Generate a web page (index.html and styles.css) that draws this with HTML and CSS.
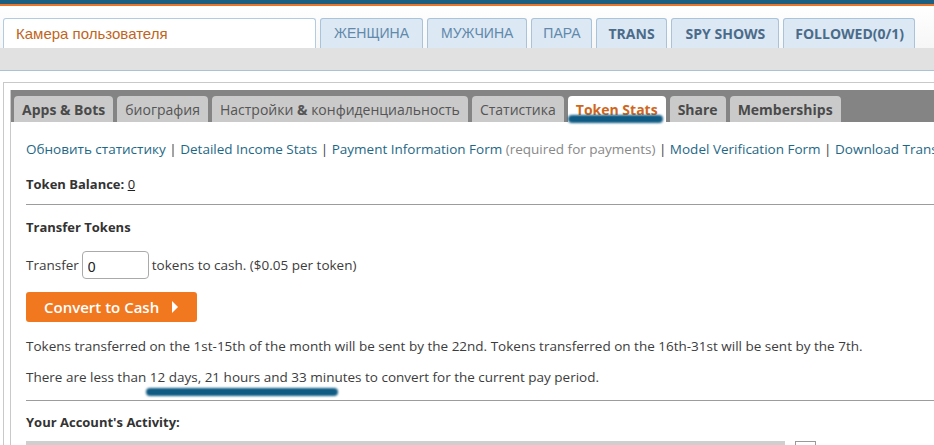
FILE: index.html
```html
<!DOCTYPE html>
<html lang="ru">
<head>
    <meta charset="UTF-8">
    <title>Token Stats</title>
    <link rel="stylesheet" href="styles.css">
</head>
<body>
    <div class="stripe"></div>
    <nav class="nav">
        <div class="search">Камера пользователя</div>
        <a class="navtab">ЖЕНЩИНА</a>
        <a class="navtab">МУЖЧИНА</a>
        <a class="navtab narrow">ПАРА</a>
        <a class="navtab bold">TRANS</a>
        <a class="navtab bold spy">SPY SHOWS</a>
        <a class="navtab bold followed">FOLLOWED(0/1)</a>
    </nav>
    <div class="subbar"></div>

    <div class="panel">
        <div class="inner">
            <ul class="tabs">
                <li>Apps &amp; Bots</li>
                <li class="light">биография</li>
                <li class="light">Настройки <b>&amp;</b> конфиденциальность</li>
                <li class="light">Статистика</li>
                <li class="active">Token Stats</li>
                <li>Share</li>
                <li>Memberships</li>
            </ul>
            <span class="mark mark-tab"></span>

            <div class="content">
                <p class="links">
                    <a>Обновить статистику</a> | <a>Detailed Income Stats</a> | <a>Payment Information Form</a> <span class="muted">(required for payments)</span> | <a>Model Verification Form</a> | <a>Download Transactions</a>
                </p>
                <p class="balance"><b>Token Balance:</b> <u>0</u></p>
                <hr>
                <h4>Transfer Tokens</h4>
                <p class="transfer">Transfer <input type="text" value="0"> tokens to cash. ($0.05 per token)</p>
                <button class="convert">Convert to Cash <span class="arrow"></span></button>
                <p class="note">Tokens transferred on the 1st-15th of the month will be sent by the 22nd. Tokens transferred on the 16th-31st will be sent by the 7th.</p>
                <p class="note second">There are less than 12 days, 21 hours and 33 minutes to convert for the current pay period.</p>
                <span class="mark mark-time"></span>
                <hr class="low">
                <h4 class="activity">Your Account's Activity:</h4>
                <div class="activity-row">
                    <div class="bar"></div>
                    <div class="box"></div>
                </div>
            </div>
        </div>
    </div>
</body>
</html>
```

FILE: styles.css
```css
body {
    margin: 0;
    background: #fff;
    font-family: 'Open Sans', sans-serif;
    color: #3c3c3c;
    overflow: hidden;
    width: 934px;
    height: 445px;
}

.stripe {
    height: 4px;
    background: #1b5f82;
    border-bottom: 2px solid #ec7428;
}

.nav {
    display: flex;
    gap: 4px;
    padding: 12px 0 0 3px;
    height: 30px;
    background: linear-gradient(#fff, #f6f6f6);
}

.search {
    box-sizing: border-box;
    width: 313px;
    height: 30px;
    padding: 6px 12px 0;
    border: 1px solid #b3cbe0;
    border-bottom: none;
    border-radius: 3px 3px 0 0;
    background: #fff;
    color: #c0651d;
    font-family: 'Liberation Sans', Arial, sans-serif;
    font-size: 15px;
}

.navtab {
    box-sizing: border-box;
    height: 30px;
    padding: 6px 13px 0;
    border: 1px solid #a9c3da;
    border-bottom: none;
    border-radius: 3px 3px 0 0;
    background: #dce8f4;
    color: #6189ab;
    font-family: 'Liberation Sans', Arial, sans-serif;
    font-size: 14px;
}

.navtab.narrow {
    padding: 6px 11px 0;
}

.navtab.bold {
    font-family: 'Open Sans', sans-serif;
    font-weight: 700;
    color: #4b6b8a;
    padding: 5px 11px 0;
}

.navtab.spy {
    padding: 5px 13px 0 14px;
}

.navtab.followed {
    padding: 5px 10px 0 11px;
}

.subbar {
    height: 22px;
    background: #e1e1e1;
    border-bottom: 1px solid #a8c2d8;
    margin-bottom: 11px;
}

.panel {
    margin-left: 3px;
    padding: 7px 0 0 6px;
    border: 1px solid #c9c9c9;
    border-right: none;
    border-bottom: none;
    overflow: hidden;
}

.inner {
    position: relative;
    border-left: 1px solid #c9c9c9;
}

.tabs {
    display: flex;
    gap: 4px;
    margin: 0;
    padding: 6px 0 0 3px;
    list-style: none;
    background: #848484;
}

.tabs li {
    height: 26px;
    padding: 1px 8px 0;
    box-sizing: border-box;
    line-height: 26px;
    background: #cacaca;
    border-radius: 4px 4px 0 0;
    font-size: 14px;
    font-weight: 700;
    color: #4a4a4a;
}

.tabs li.light {
    font-weight: 400;
    color: #555;
}

.tabs li.active {
    background: #fff;
    color: #d0661b;
}

.mark {
    position: absolute;
    display: block;
    height: 8px;
    border-radius: 5px;
    background: #0f5b84;
    filter: blur(1.2px);
}

.mark-tab {
    left: 557px;
    top: 25px;
    width: 95px;
}

.content {
    position: relative;
    padding: 18px 0 0 15px;
    font-size: 13px;
}

.content p {
    margin: 0;
    line-height: 18px;
    white-space: nowrap;
}

.links,
.transfer,
.note {
    font-size: 13.5px;
}

.links {
    overflow: hidden;
}

.links a {
    color: #1e6886;
}

.muted {
    color: #888;
}

.balance {
    margin-top: 17px !important;
}

.balance b {
    color: #333;
}

.balance u {
    color: #222;
}

hr {
    margin: 11px 0 0;
    border: none;
    border-top: 1px solid #9c9c9c;
}

h4 {
    margin: 13px 0 0;
    font-size: 13px;
    line-height: 18px;
    color: #333;
}

.transfer {
    display: flex;
    align-items: center;
    gap: 3px;
    margin-top: 15px !important;
}

.transfer input {
    box-sizing: border-box;
    width: 67px;
    height: 28px;
    padding: 4px 5px 0;
    border: 1px solid #aaa;
    border-radius: 4px;
    font-family: 'Liberation Sans', Arial, sans-serif;
    font-size: 14px;
    color: #222;
}

.convert {
    display: flex;
    align-items: center;
    gap: 13px;
    margin-top: 13px;
    height: 30px;
    padding: 0 19px 0 18px;
    border: none;
    border-radius: 3px;
    background: #f2781f;
    color: #fff;
    font-family: 'Open Sans', sans-serif;
    font-size: 15px;
    font-weight: 600;
}

.arrow {
    width: 0;
    height: 0;
    border-left: 6px solid #fff;
    border-top: 6px solid transparent;
    border-bottom: 6px solid transparent;
}

.note {
    margin-top: 15px !important;
    color: #3c3c3c;
}

.note.second {
    margin-top: 13px !important;
}

.mark-time {
    left: 135px;
    top: 266px;
    width: 192px;
}

hr.low {
    margin-top: 14px;
}

.activity {
    margin-top: 12px;
}

.activity-row {
    display: flex;
    align-items: flex-start;
    gap: 10px;
    margin-top: 10px;
}

.bar {
    width: 759px;
    height: 8px;
    background: #cfcfcf;
}

.box {
    width: 19px;
    height: 8px;
    border: 1px solid #999;
    border-bottom: none;
    background: #fff;
}
```
